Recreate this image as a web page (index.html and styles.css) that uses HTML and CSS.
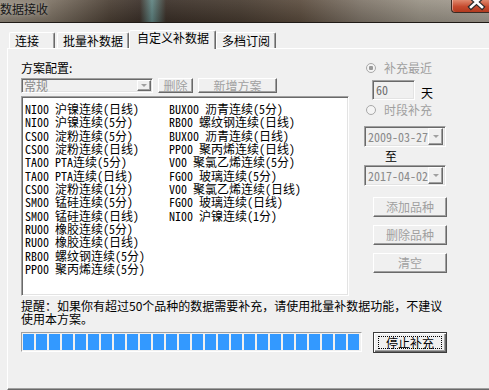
FILE: index.html
```html
<!DOCTYPE html>
<html lang="zh-CN">
<head>
    <meta charset="UTF-8">
    <title>数据接收</title>
    <link rel="stylesheet" href="styles.css">
</head>
<body>
    <div class="titlebar">
        <span class="title">数据接收</span>
        <span class="close">
            <svg width="37" height="14" viewBox="0 0 37 14">
                <path d="M19 -3 L30 7 M30 -3 L19 7" stroke="#2b2b2b" stroke-width="5" stroke-linecap="square"/>
                <path d="M19 -3 L30 7 M30 -3 L19 7" stroke="#fff" stroke-width="2.6" stroke-linecap="square"/>
            </svg>
        </span>
    </div>
    <div class="tabs">
        <div class="tab first">连接</div>
        <div class="tab">批量补数据</div>
        <div class="tab active">自定义补数据</div>
        <div class="tab">多档订阅</div>
    </div>
    <div class="panel">
        <div class="main">
            <div class="left">
                <div class="label">方案配置:</div>
                <div class="scheme-row">
                    <div class="combo scheme"><span>常规</span><i class="arrow"></i></div>
                    <button class="btn del" disabled>删除</button>
                    <button class="btn add" disabled>新增方案</button>
                </div>
                <div class="listbox">
                    <div class="list">
                        <div>NI00 沪镍连续(日线)</div>
                        <div>NI00 沪镍连续(5分)</div>
                        <div>CS00 淀粉连续(5分)</div>
                        <div>CS00 淀粉连续(日线)</div>
                        <div>TA00 PTA连续(5分)</div>
                        <div>TA00 PTA连续(日线)</div>
                        <div>CS00 淀粉连续(1分)</div>
                        <div>SM00 锰硅连续(5分)</div>
                        <div>SM00 锰硅连续(日线)</div>
                        <div>RU00 橡胶连续(5分)</div>
                        <div>RU00 橡胶连续(日线)</div>
                        <div>RB00 螺纹钢连续(5分)</div>
                        <div>PP00 聚丙烯连续(5分)</div>
                        <div>BUX00 沥青连续(5分)</div>
                        <div>RB00 螺纹钢连续(日线)</div>
                        <div>BUX00 沥青连续(日线)</div>
                        <div>PP00 聚丙烯连续(日线)</div>
                        <div>V00 聚氯乙烯连续(5分)</div>
                        <div>FG00 玻璃连续(5分)</div>
                        <div>V00 聚氯乙烯连续(日线)</div>
                        <div>FG00 玻璃连续(日线)</div>
                        <div>NI00 沪镍连续(1分)</div>
                    </div>
                </div>
            </div>
            <div class="right">
                <div class="radio checked">补充最近</div>
                <div class="days">
                    <span class="edit">60</span>
                    <span class="unit">天</span>
                </div>
                <div class="radio">时段补充</div>
                <div class="combo date"><span>2009-03-27</span><i class="arrow"></i></div>
                <div class="to">至</div>
                <div class="combo date second"><span>2017-04-02</span><i class="arrow"></i></div>
                <button class="btn side" disabled>添加品种</button>
                <button class="btn side" disabled>删除品种</button>
                <button class="btn side clear" disabled>清空</button>
            </div>
        </div>
        <div class="note">提醒：如果你有超过50个品种的数据需要补充，请使用批量补数据功能，不建议<br>使用本方案。</div>
        <div class="progress-row">
            <div class="progress"><div class="fill" style="width: 336px"></div></div>
            <button class="btn stop"><span>停止补充</span></button>
        </div>
    </div>
</body>
</html>
```

FILE: styles.css
```css
* {
    box-sizing: border-box;
}
body {
    margin: 0;
    width: 489px;
    height: 390px;
    overflow: hidden;
    background: #f0f0f0;
    font: 12px/14px "Noto Sans CJK SC", "Liberation Sans", sans-serif;
    color: #000;
}
.titlebar {
    height: 23px;
    border-bottom: 1px solid #1f1a16;
    display: flex;
    justify-content: space-between;
    align-items: flex-start;
    background:
        linear-gradient(rgba(255,255,255,0.08), rgba(0,0,0,0.15)),
        linear-gradient(90deg, #948b7e 0, #7d7264 50px, #4a3e33 110px, #3b3029 140px, #5f8482 152px, #3a2f27 166px, #463a2f 240px, #5a4b3d 300px, #7e7468 360px, #989184 420px, #a39c92 489px);
}
.title {
    line-height: 18px;
    color: #151515;
    text-shadow: 0 0 5px rgba(255,255,255,0.45);
}
.close {
    width: 38px;
    height: 14px;
    margin-top: -1px;
    border: 1px solid #3a2a24;
    border-right: none;
    border-radius: 0 0 0 4px;
    background: linear-gradient(#e0896e, #c64a2e 55%, #b23a1f);
    box-shadow: inset 1px 0 rgba(255,255,255,0.4);
}
.close svg {
    display: block;
}
.tabs {
    display: flex;
    align-items: flex-end;
    height: 25px;
    padding-left: 9px;
}
.tab {
    height: 16px;
    min-width: 46px;
    padding: 1px 5px 0;
    border: 1px solid #fff;
    border-bottom: none;
    border-right-color: #696969;
    border-radius: 2px 2px 0 0;
    box-shadow: inset -1px 0 #a0a0a0;
    line-height: 14px;
}
.tab.first {
    margin-right: 2px;
}
.tab.active {
    height: 19px;
    margin-bottom: -1px;
    padding: 0 6px 0 7px;
    background: #f0f0f0;
    position: relative;
    z-index: 1;
}
.panel {
    margin-left: 7px;
    width: 500px;
    height: 342px;
    border-top: 1px solid #fff;
    border-left: 1px solid #fff;
    border-bottom: 1px solid #696969;
    box-shadow: inset 0 -1px #a0a0a0;
    padding: 12px 0 0 13px;
}
.main {
    display: flex;
    gap: 15px;
}
.left {
    width: 328px;
}
.label {
    height: 14px;
}
.scheme-row {
    display: flex;
    margin-top: 3px;
    height: 15px;
}
.combo {
    display: flex;
    align-items: center;
    justify-content: space-between;
    border: 1px solid;
    border-color: #a0a0a0 #fff #fff #a0a0a0;
    box-shadow: inset 1px 1px #696969, inset -1px -1px #e3e3e3;
    color: #8a8a8a;
    padding: 2px 2px 2px 3px;
}
.combo.scheme {
    width: 132px;
    height: 15px;
    padding: 1px 1px 1px 2px;
    line-height: 12px;
}
.arrow {
    width: 14px;
    height: 11px;
    border: 1px solid;
    border-color: #fff #696969 #696969 #fff;
    box-shadow: inset -1px -1px #a0a0a0;
    display: flex;
    align-items: center;
    justify-content: center;
}
.arrow::after {
    content: "";
    border-left: 3px solid transparent;
    border-right: 3px solid transparent;
    border-top: 3px solid #a0a0a0;
}
.btn {
    font: inherit;
    padding: 0;
    background: #f0f0f0;
    border: 1px solid;
    border-color: #fff #696969 #696969 #fff;
    box-shadow: inset -1px -1px #a0a0a0;
    color: #a0a0a0;
    line-height: 12px;
    display: flex;
    align-items: center;
    justify-content: center;
}
.btn.del {
    width: 35px;
    margin-left: 5px;
}
.btn.add {
    width: 79px;
    margin-left: 5px;
}
.listbox {
    margin-top: 3px;
    width: 328px;
    height: 200px;
    background: #fff;
    border: 1px solid;
    border-color: #a0a0a0 #fff #fff #a0a0a0;
    box-shadow: inset 1px 1px #696969, inset -1px -1px #e3e3e3;
    padding: 5px 2px 0 3px;
}
.list {
    display: grid;
    grid-template-rows: repeat(13, 13.33px);
    grid-auto-flow: column;
    grid-auto-columns: 144px;
    font: 12px/13.33px "Noto Sans Mono CJK SC", "Noto Sans CJK SC", monospace;
    white-space: pre;
}
.right {
    width: 83px;
}
.radio {
    display: flex;
    align-items: center;
    height: 14px;
    padding-left: 2px;
    color: #a0a0a0;
}
.radio::before {
    content: "";
    width: 10px;
    height: 10px;
    margin-right: 8px;
    border-radius: 50%;
    border: 1px solid #a8a8a8;
    background: radial-gradient(#f4f4f4 0 100%);
    box-sizing: border-box;
}
.radio.checked::before {
    background: radial-gradient(circle, #9a9a9a 0 2px, #f4f4f4 2.5px);
}
.days {
    display: flex;
    align-items: flex-end;
    margin: 5px 0 3px 8px;
    height: 20px;
}
.edit {
    width: 43px;
    height: 20px;
    border: 1px solid;
    border-color: #a0a0a0 #fff #fff #a0a0a0;
    box-shadow: inset 1px 1px #696969, inset -1px -1px #e3e3e3;
    color: #6d6d6d;
    padding: 2px 0 0 3px;
    font-family: "Noto Sans Mono CJK SC", "Liberation Mono", monospace;
}
.unit {
    margin-left: 6px;
    line-height: 15px;
}
.combo.date {
    width: 82px;
    height: 21px;
    margin-top: 9px;
    font-family: "Noto Sans Mono CJK SC", "Liberation Mono", monospace;
    line-height: 14px;
}
.combo.date .arrow {
    width: 15px;
    height: 17px;
}
.combo.date.second {
    margin-top: 2px;
}
.to {
    margin: 2px 0 0 21px;
    height: 14px;
}
.btn.side {
    width: 74px;
    height: 20px;
    margin: 11px 0 0 9px;
}
.btn.side + .btn.side {
    margin-top: 8px;
}
.btn.side.clear {
    margin-top: 18px;
}
.note {
    margin-top: 3px;
    line-height: 13px;
}
.progress-row {
    display: flex;
    gap: 11px;
    margin-top: 7px;
}
.progress {
    width: 341px;
    height: 20px;
    border: 1px solid;
    border-color: #a0a0a0 #fff #fff #a0a0a0;
    padding: 1px;
}
.fill {
    height: 16px;
    background: repeating-linear-gradient(90deg, #3399ff 0 11px, transparent 11px 13px);
}
.btn.stop {
    width: 74px;
    height: 21px;
    border: 1px solid #3c3c3c;
    box-shadow: inset 1px 1px #fff, inset -1px -1px #696969, inset -2px -2px #a0a0a0;
    color: #000;
    padding: 3px 4px 3px 4px;
}
.btn.stop span {
    display: flex;
    align-items: center;
    justify-content: center;
    width: 100%;
    height: 100%;
    border: 1px dotted #000;
}
```
